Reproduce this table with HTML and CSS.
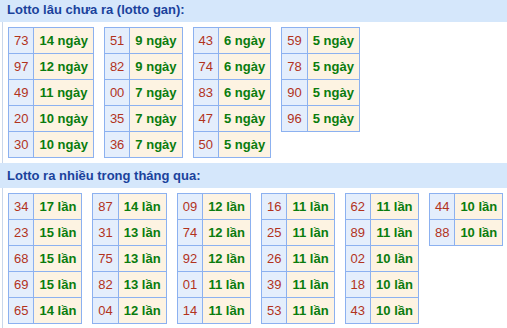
FILE: index.html
```html
<!DOCTYPE html>
<html lang="vi">
<head>
<meta charset="utf-8">
<title>Lotto</title>
<link rel="stylesheet" href="styles.css">
</head>
<body>
<section class="sec sec-first">
  <h2 class="sec-title">Lotto lâu chưa ra (lotto gan):</h2>
  <div class="sec-body">
    <table class="lt"><tbody>
      <tr><td class="n">73</td><td class="v">14 ngày</td></tr>
      <tr><td class="n">97</td><td class="v">12 ngày</td></tr>
      <tr><td class="n">49</td><td class="v">11 ngày</td></tr>
      <tr><td class="n">20</td><td class="v">10 ngày</td></tr>
      <tr><td class="n">30</td><td class="v">10 ngày</td></tr>
    </tbody></table>
    <table class="lt"><tbody>
      <tr><td class="n">51</td><td class="v">9 ngày</td></tr>
      <tr><td class="n">82</td><td class="v">9 ngày</td></tr>
      <tr><td class="n">00</td><td class="v">7 ngày</td></tr>
      <tr><td class="n">35</td><td class="v">7 ngày</td></tr>
      <tr><td class="n">36</td><td class="v">7 ngày</td></tr>
    </tbody></table>
    <table class="lt"><tbody>
      <tr><td class="n">43</td><td class="v">6 ngày</td></tr>
      <tr><td class="n">74</td><td class="v">6 ngày</td></tr>
      <tr><td class="n">83</td><td class="v">6 ngày</td></tr>
      <tr><td class="n">47</td><td class="v">5 ngày</td></tr>
      <tr><td class="n">50</td><td class="v">5 ngày</td></tr>
    </tbody></table>
    <table class="lt"><tbody>
      <tr><td class="n">59</td><td class="v">5 ngày</td></tr>
      <tr><td class="n">78</td><td class="v">5 ngày</td></tr>
      <tr><td class="n">90</td><td class="v">5 ngày</td></tr>
      <tr><td class="n">96</td><td class="v">5 ngày</td></tr>
    </tbody></table>
  </div>
</section>
<section class="sec">
  <h2 class="sec-title">Lotto ra nhiều trong tháng qua:</h2>
  <div class="sec-body">
    <table class="lt"><tbody>
      <tr><td class="n">34</td><td class="v">17 lần</td></tr>
      <tr><td class="n">23</td><td class="v">15 lần</td></tr>
      <tr><td class="n">68</td><td class="v">15 lần</td></tr>
      <tr><td class="n">69</td><td class="v">15 lần</td></tr>
      <tr><td class="n">65</td><td class="v">14 lần</td></tr>
    </tbody></table>
    <table class="lt"><tbody>
      <tr><td class="n">87</td><td class="v">14 lần</td></tr>
      <tr><td class="n">31</td><td class="v">13 lần</td></tr>
      <tr><td class="n">75</td><td class="v">13 lần</td></tr>
      <tr><td class="n">82</td><td class="v">13 lần</td></tr>
      <tr><td class="n">04</td><td class="v">12 lần</td></tr>
    </tbody></table>
    <table class="lt"><tbody>
      <tr><td class="n">09</td><td class="v">12 lần</td></tr>
      <tr><td class="n">74</td><td class="v">12 lần</td></tr>
      <tr><td class="n">92</td><td class="v">12 lần</td></tr>
      <tr><td class="n">01</td><td class="v">11 lần</td></tr>
      <tr><td class="n">14</td><td class="v">11 lần</td></tr>
    </tbody></table>
    <table class="lt"><tbody>
      <tr><td class="n">16</td><td class="v">11 lần</td></tr>
      <tr><td class="n">25</td><td class="v">11 lần</td></tr>
      <tr><td class="n">26</td><td class="v">11 lần</td></tr>
      <tr><td class="n">39</td><td class="v">11 lần</td></tr>
      <tr><td class="n">53</td><td class="v">11 lần</td></tr>
    </tbody></table>
    <table class="lt"><tbody>
      <tr><td class="n">62</td><td class="v">11 lần</td></tr>
      <tr><td class="n">89</td><td class="v">11 lần</td></tr>
      <tr><td class="n">02</td><td class="v">10 lần</td></tr>
      <tr><td class="n">18</td><td class="v">10 lần</td></tr>
      <tr><td class="n">43</td><td class="v">10 lần</td></tr>
    </tbody></table>
    <table class="lt"><tbody>
      <tr><td class="n">44</td><td class="v">10 lần</td></tr>
      <tr><td class="n">88</td><td class="v">10 lần</td></tr>
    </tbody></table>
  </div>
</section>
</body>
</html>
```

FILE: styles.css
```css
html, body {
  margin: 0;
  padding: 0;
  background: #ffffff;
}

body {
  font-family: "Liberation Sans", Arial, sans-serif;
  font-size: 13px;
  overflow: hidden;
}

.sec-first {
  margin-top: -3px;
}

.sec-title {
  margin: 0;
  padding: 5px 0 5px 7px;
  height: 15px;
  line-height: 15px;
  font-size: 13px;
  font-weight: bold;
  color: #1a429c;
  background: #d5e7fb;
}

.sec-body {
  margin-left: 2px;
  border-left: 1px solid #c9d7ea;
  padding: 5px 0 5px 5px;
  display: flex;
  align-items: flex-start;
  gap: 10px;
}

.lt {
  border-collapse: collapse;
  flex: none;
}

.lt td {
  border: 1px solid #8cb1f0;
  padding: 5px;
  line-height: 15px;
  text-align: center;
  white-space: nowrap;
}

.lt .n {
  background: #e4eefc;
  color: #b2331d;
}

.lt .v {
  background: #fdf3e2;
  color: #0a7c0e;
  font-weight: bold;
}
```
